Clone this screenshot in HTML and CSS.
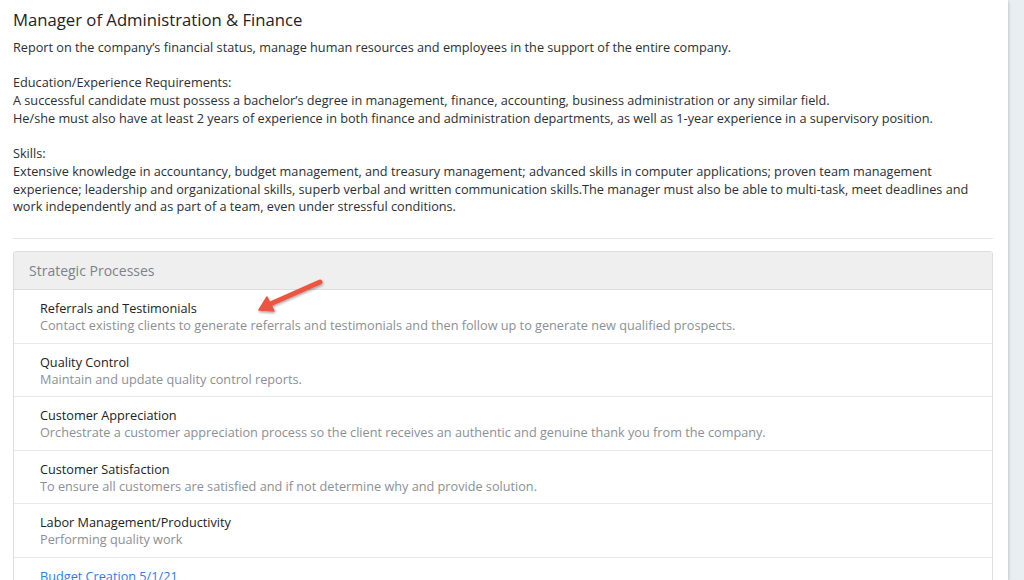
FILE: index.html
```html
<!DOCTYPE html>
<html lang="en">
<head>
    <meta charset="UTF-8">
    <meta name="viewport" content="width=device-width, initial-scale=1.0">
    <title>Manager of Administration &amp; Finance</title>
    <link rel="stylesheet" href="styles.css">
</head>
<body>
<div class="page">
    <h1 class="job-title">Manager of Administration &amp; Finance</h1>

    <p>Report on the company’s financial status, manage human resources and employees in the support of the entire company.</p>
    <p>Education/Experience Requirements:<br>
    A successful candidate must possess a bachelor’s degree in management, finance, accounting, business administration or any similar field.<br>
    He/she must also have at least 2 years of experience in both finance and administration departments, as well as 1-year experience in a supervisory position.</p>
    <p>Skills:<br>
    Extensive knowledge in accountancy, budget management, and treasury management; advanced skills in computer applications; proven team management experience; leadership and organizational skills, superb verbal and written communication skills.The manager must also be able to multi-task, meet deadlines and work independently and as part of a team, even under stressful conditions.</p>

    <hr class="divider">

    <div class="panel">
        <div class="panel-heading">Strategic Processes</div>
        <div class="process">
            <div class="process-name">Referrals and Testimonials</div>
            <div class="process-desc">Contact existing clients to generate referrals and testimonials and then follow up to generate new qualified prospects.</div>
        </div>
        <div class="process">
            <div class="process-name">Quality Control</div>
            <div class="process-desc">Maintain and update quality control reports.</div>
        </div>
        <div class="process">
            <div class="process-name">Customer Appreciation</div>
            <div class="process-desc">Orchestrate a customer appreciation process so the client receives an authentic and genuine thank you from the company.</div>
        </div>
        <div class="process">
            <div class="process-name">Customer Satisfaction</div>
            <div class="process-desc">To ensure all customers are satisfied and if not determine why and provide solution.</div>
        </div>
        <div class="process">
            <div class="process-name">Labor Management/Productivity</div>
            <div class="process-desc">Performing quality work</div>
        </div>
        <div class="process">
            <a class="process-link" href="#">Budget Creation 5/1/21</a>
            <div class="process-desc">Create the yearly budget</div>
        </div>
    </div>

    <!-- annotation arrow -->
    <svg class="arrow" width="80" height="45" viewBox="0 0 80 45">
        <defs>
            <filter id="sh" x="-20%" y="-20%" width="140%" height="160%">
                <feDropShadow dx="0.5" dy="1.5" stdDeviation="1" flood-color="#000" flood-opacity="0.35"/>
            </filter>
        </defs>
        <g filter="url(#sh)" fill="#ee5441" stroke="#ee5441">
            <line x1="70" y1="7" x2="18" y2="30" stroke-width="5" stroke-linecap="round"/>
            <polygon points="9,35 24,36 17,22" stroke-width="1.5" stroke-linejoin="round"/>
        </g>
    </svg>
</div>
</body>
</html>
```

FILE: styles.css
```css
body {
    margin: 0;
    background-color: #e8eef2;
    font-family: "Open Sans", Arial, sans-serif;
    color: #2b2f33;
    overflow: hidden;
}

.page {
    position: relative;
    width: 1008px;
    height: 580px;
    box-sizing: border-box;
    padding: 10px 15px 0 13px;
    background-color: #fff;
    box-shadow: 0 2px 4px rgba(0, 0, 0, 0.18), 1px 0 2px rgba(0, 0, 0, 0.05);
}

.job-title {
    margin: 0 0 9px;
    font-size: 16.7px;
    font-weight: 400;
    line-height: 20px;
    color: #1f2226;
}

p {
    margin: 0 0 17.7px;
    font-size: 12.7px;
    line-height: 17.7px;
}

.divider {
    margin: 22px 0 12px;
    border: 0;
    border-top: 1px solid #e6e6e6;
}

.panel {
    border: 1px solid #dedede;
    border-radius: 3px;
}

.panel-heading {
    height: 37px;
    line-height: 37px;
    padding-left: 15px;
    background-color: #efefef;
    border-bottom: 1px solid #dcdcdc;
    font-size: 14px;
    color: #7d8288;
}

.process {
    padding: 10px 26px 8.6px;
    border-top: 1px solid #e8e8e8;
    font-size: 12.7px;
    line-height: 17px;
}

.process:nth-child(2) {
    border-top: 0;
}

.process-name {
    color: #222;
}

.process-desc {
    color: #8b9095;
}

.process-link {
    color: #2f7be8;
    text-decoration: none;
}

.arrow {
    position: absolute;
    left: 250px;
    top: 275px;
}
```
